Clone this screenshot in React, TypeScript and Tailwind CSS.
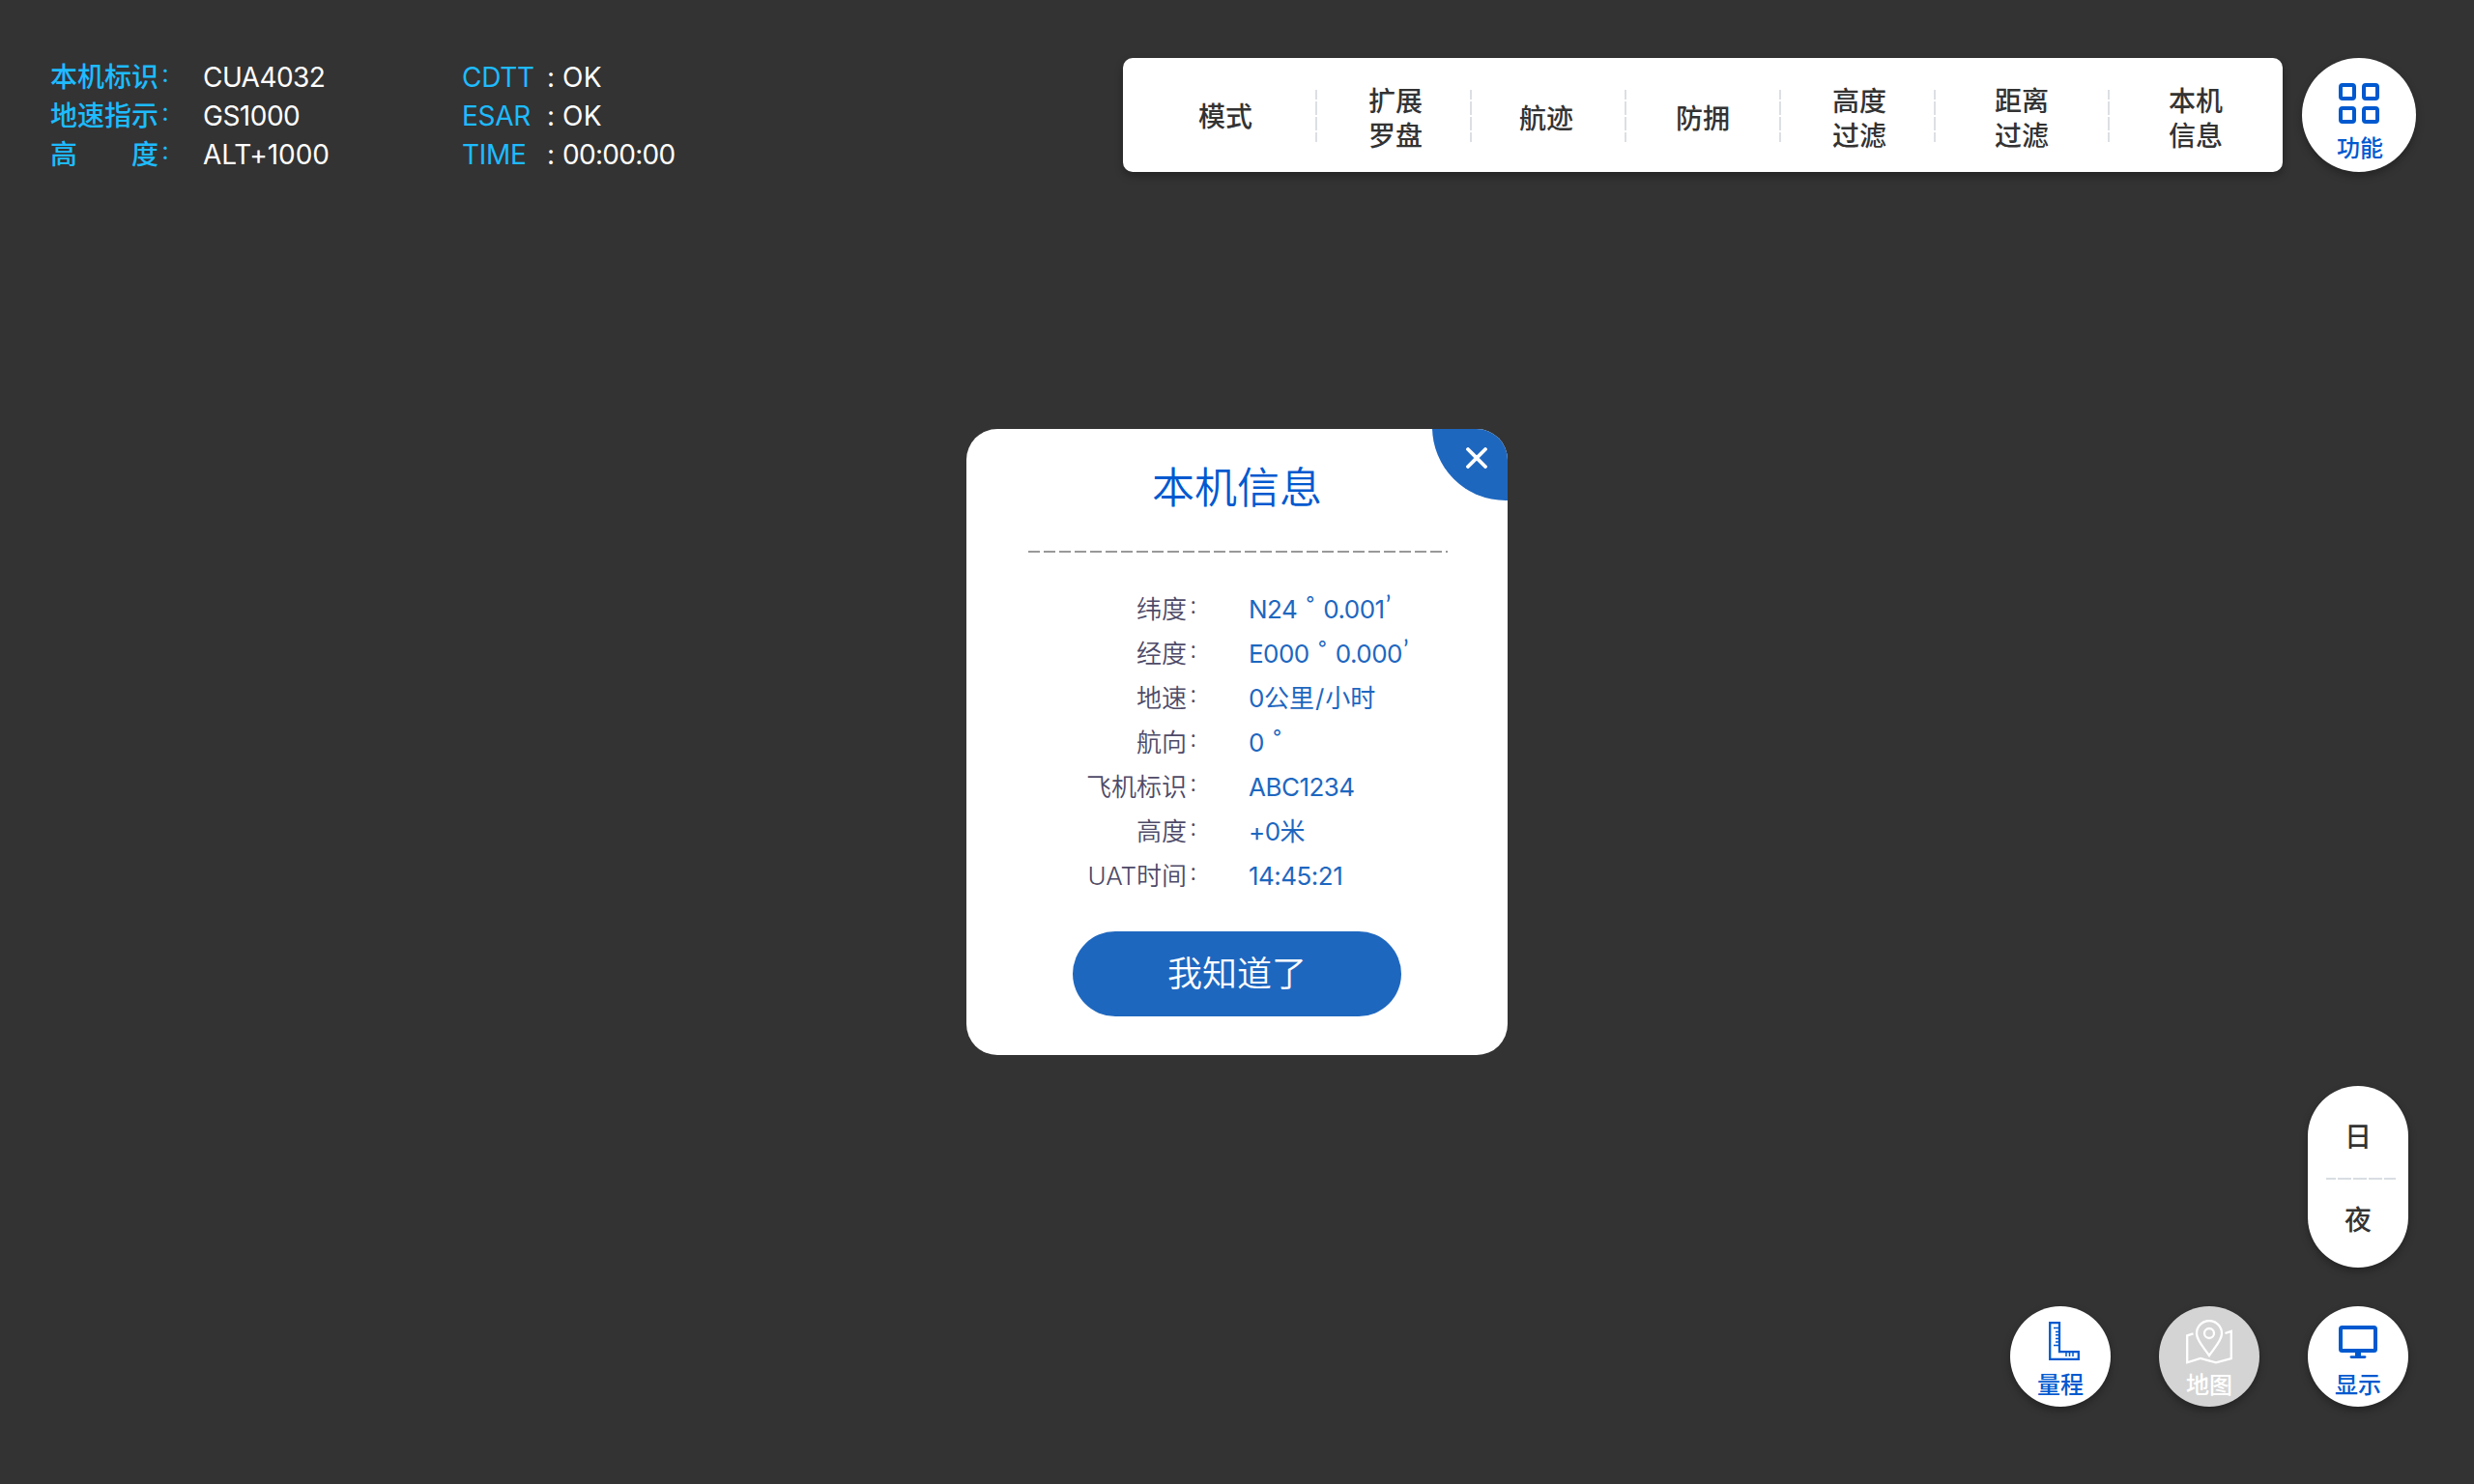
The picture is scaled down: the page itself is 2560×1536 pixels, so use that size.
import React from "react";

const SHADOW = "shadow-[0_4px_8px_rgba(0,0,0,0.3)]";

type Status = { label: string; value: string; fit: string };

const leftStatus: Status[] = [
  { label: "本机标识", value: "CUA4032", fit: "tracking-[-0.020em]" },
  { label: "地速指示", value: "GS1000", fit: "tracking-[-0.018em]" },
  { label: "高度", value: "ALT+1000", fit: "tracking-[-0.002em]" },
];

const rightStatus: Status[] = [
  { label: "CDTT", value: "OK", fit: "tracking-[0.010em]" },
  { label: "ESAR", value: "OK", fit: "tracking-[0.010em]" },
  { label: "TIME", value: "00:00:00", fit: "tracking-[-0.025em]" },
];

const menu = [
  { lines: ["模式"], cell: "w-[200px] pl-3 pt-1" },
  { lines: ["扩展", "罗盘"], cell: "w-40 pl-1 pt-2" },
  { lines: ["航迹"], cell: "w-40 pr-1 pt-2" },
  { lines: ["防拥"], cell: "w-40 pt-2" },
  { lines: ["高度", "过滤"], cell: "w-40 pl-1 pt-2" },
  { lines: ["距离", "过滤"], cell: "w-[180px] pt-2" },
  { lines: ["本机", "信息"], cell: "w-[180px] pt-2" },
];

type Info = { label: string; value: React.ReactNode };

const Degree = ({ deg, min }: { deg: string; min?: string }) => (
  <>
    {deg}
    <span className="relative -top-2 inline-block w-[27px] pl-[9px] text-[20px] leading-none">°</span>
    {min}
    {min && <span className="relative -top-1 ml-px font-['Lato'] leading-none">’</span>}
  </>
);

const info: Info[] = [
  { label: "纬度", value: <Degree deg="N24" min="0.001" /> },
  { label: "经度", value: <Degree deg="E000" min="0.000" /> },
  {
    label: "地速",
    value: (
      <>
        0
        <span className="tracking-normal">
          公里<span className="px-px">/</span>小时
        </span>
      </>
    ),
  },
  { label: "航向", value: <Degree deg="0" /> },
  { label: "飞机标识", value: "ABC1234" },
  { label: "高度", value: "+0米" },
  { label: "UAT时间", value: "14:45:21" },
];

function VerticalDashes() {
  return (
    <div className="-mx-px mt-0.5 flex w-0.5 shrink-0 flex-col gap-0.5">
      <i className="h-2.5 bg-[#dcdfe3]" />
      <i className="h-3.5 bg-[#dcdfe3]" />
      <i className="h-3.5 bg-[#dcdfe3]" />
      <i className="h-2.5 bg-[#dcdfe3]" />
    </div>
  );
}

function GridIcon() {
  return (
    <svg width="42" height="42" viewBox="0 0 42 42" fill="none" stroke="#0059CF" strokeWidth="4">
      <rect x="2" y="2" width="14" height="14" rx="2" />
      <rect x="26" y="2" width="14" height="14" rx="2" />
      <rect x="2" y="26" width="14" height="14" rx="2" />
      <rect x="26" y="26" width="14" height="14" rx="2" />
    </svg>
  );
}

function RulerIcon() {
  return (
    <svg width="32" height="40" viewBox="0 0 32 40" fill="none" stroke="#0059CF">
      <path d="M1.200 1.200H11V31.200H30.800V38.800H1.200Z" strokeWidth="2.300" />
      <path d="M5 6.500H11M7 10.500H11M7 13.800H11M7 17.500H11M7 21H11M5 24.500H11M18 31V36M21.500 31V36M25 31V36" strokeWidth="1.500" />
    </svg>
  );
}

function MapIcon() {
  return (
    <svg width="48" height="46" viewBox="0 0 48 46" fill="none" stroke="#fff" strokeWidth="2.300">
      <path d="M24 37C19 29.500 11 21.500 11 14.200a13 13.200 0 0 1 26 0C37 21.500 29 29.500 24 37Z" />
      <circle cx="24" cy="14" r="5" />
      <path d="M7.500 14.300L1.200 16.300V44.300L15 40L31 44.300L46.800 40V11.800L40.500 14" />
    </svg>
  );
}

function MonitorIcon() {
  return (
    <svg width="40" height="34" viewBox="0 0 40 34" fill="none" stroke="#0059CF">
      <rect x="2" y="2" width="36" height="24" rx="1.500" strokeWidth="4" />
      <path d="M20 27V32" strokeWidth="6" />
      <path d="M13 32.600H27" strokeWidth="2.800" strokeLinecap="round" />
    </svg>
  );
}

function RoundButton({ label, tone, icon }: { label: string; tone: string; icon: React.ReactNode }) {
  return (
    <button className={`flex size-[104px] flex-col items-center rounded-full ${tone} ${SHADOW}`}>
      <span className="flex h-[68px] flex-col items-center">{icon}</span>
      <span className="text-[24px] leading-7 font-medium">{label}</span>
    </button>
  );
}

export default function App() {
  return (
    <div className="relative flex h-[1536px] w-[2560px] flex-col overflow-hidden bg-[#333333] font-['Inter','Noto_Sans_CJK_SC',sans-serif]">
      <header className="flex pt-[60px]">
        <section className="ml-[52px] w-[426px] text-[28px] leading-10">
          {leftStatus.map((s) => (
            <div key={s.value} className="flex h-10">
              <div className="flex w-28 justify-between font-medium text-[#1EBBFF]">
                {s.label.split("").map((c) => (
                  <span key={c}>{c}</span>
                ))}
              </div>
              <span className="-mt-0.5 w-[46px] pl-0.5 text-[20px] font-medium text-[#1EBBFF]">：</span>
              <span className={`text-white ${s.fit}`}>{s.value}</span>
            </div>
          ))}
        </section>
        <section className="w-[684px] text-[28px] leading-10 text-white">
          {rightStatus.map((s) => (
            <div key={s.label} className="flex">
              <span className="w-[88px] tracking-[-0.010em] text-[#1EBBFF]">{s.label}</span>
              <span className="w-4">:</span>
              <span className={s.fit}>{s.value}</span>
            </div>
          ))}
        </section>
        <nav className={`flex h-[118px] w-[1200px] items-center rounded-[10px] bg-white ${SHADOW}`}>
          {menu.map((m, i) => (
            <React.Fragment key={m.lines.join("")}>
              {i > 0 && <VerticalDashes />}
              <button className={`flex shrink-0 flex-col items-center text-[28px] leading-9 font-medium text-[#333333] ${m.cell}`}>
                {m.lines.map((l) => (
                  <span key={l}>{l}</span>
                ))}
              </button>
            </React.Fragment>
          ))}
        </nav>
        <button className={`ml-5 flex size-[118px] flex-col items-center rounded-full bg-white pt-[26px] text-[#0059CF] ${SHADOW}`}>
          <GridIcon />
          <span className="mt-3 ml-0.5 text-[24px] leading-7 font-medium">功能</span>
        </button>
      </header>

      <aside className="mt-auto mr-[68px] mb-20 flex flex-col items-end gap-10">
        <div className={`flex h-[188px] w-[104px] flex-col items-center rounded-[52px] bg-white text-[28px] leading-9 font-medium text-[#333333] ${SHADOW}`}>
          <span className="mt-[35px]">日</span>
          <div className="mt-6 mr-[-6px] flex h-0.5 w-[72px] gap-0.5">
            <i className="w-2.5 bg-[#d9dee3]" />
            <i className="w-3.5 bg-[#d9dee3]" />
            <i className="w-3.5 bg-[#d9dee3]" />
            <i className="w-3.5 bg-[#d9dee3]" />
            <i className="w-3 bg-[#d9dee3]" />
          </div>
          <span className="mt-6">夜</span>
        </div>
        <div className="flex gap-[50px]">
          <RoundButton label="量程" tone="bg-white text-[#0059CF]" icon={<div className="mt-4 ml-2"><RulerIcon /></div>} />
          <RoundButton label="地图" tone="bg-[#D4D4D4] text-white" icon={<div className="mt-3.5"><MapIcon /></div>} />
          <RoundButton label="显示" tone="bg-white text-[#0059CF]" icon={<div className="mt-5"><MonitorIcon /></div>} />
        </div>
      </aside>

      <div className="absolute inset-0 flex items-center justify-center">
        <div role="dialog" className="relative flex h-[648px] w-[560px] flex-col items-center overflow-hidden rounded-[32px] bg-white">
          <button aria-label="关闭" className="absolute -top-[78px] -right-[74px] size-[152px] rounded-full bg-[#1E67BF]">
            <svg className="absolute top-[97px] left-[35px]" width="22" height="22" viewBox="0 0 22 22" stroke="#fff" strokeWidth="3.800" strokeLinecap="round">
              <path d="M2 2L20 20M20 2L2 20" />
            </svg>
          </button>
          <h1 className="mt-[33px] text-[44px] leading-[56px] font-[350] text-[#0059CF]">本机信息</h1>
          <div className="mt-[37px] ml-0.5 h-0.5 w-[434px] bg-[repeating-linear-gradient(90deg,#999999_0_12px,transparent_12px_16px)]" />
          <dl className="mt-9 flex w-full flex-col text-[26px] leading-[46px]">
            {info.map((r) => (
              <div key={r.label} className="flex h-[46px]">
                <dt className="flex w-[254px] justify-end font-[350] text-[#4E4A67]">
                  <span>{r.label}</span>
                  <span className="-mt-[2.5px] w-[26px] pl-0.5 text-[19px]">：</span>
                </dt>
                <dd className="ml-[38px] tracking-[-0.020em] text-[#1E67BF]">{r.value}</dd>
              </div>
            ))}
          </dl>
          <button className="mt-[34px] h-[88px] w-[340px] rounded-full bg-[#1E67BF] text-[36px] leading-[88px] font-[350] text-white">我知道了</button>
        </div>
      </div>
    </div>
  );
}
